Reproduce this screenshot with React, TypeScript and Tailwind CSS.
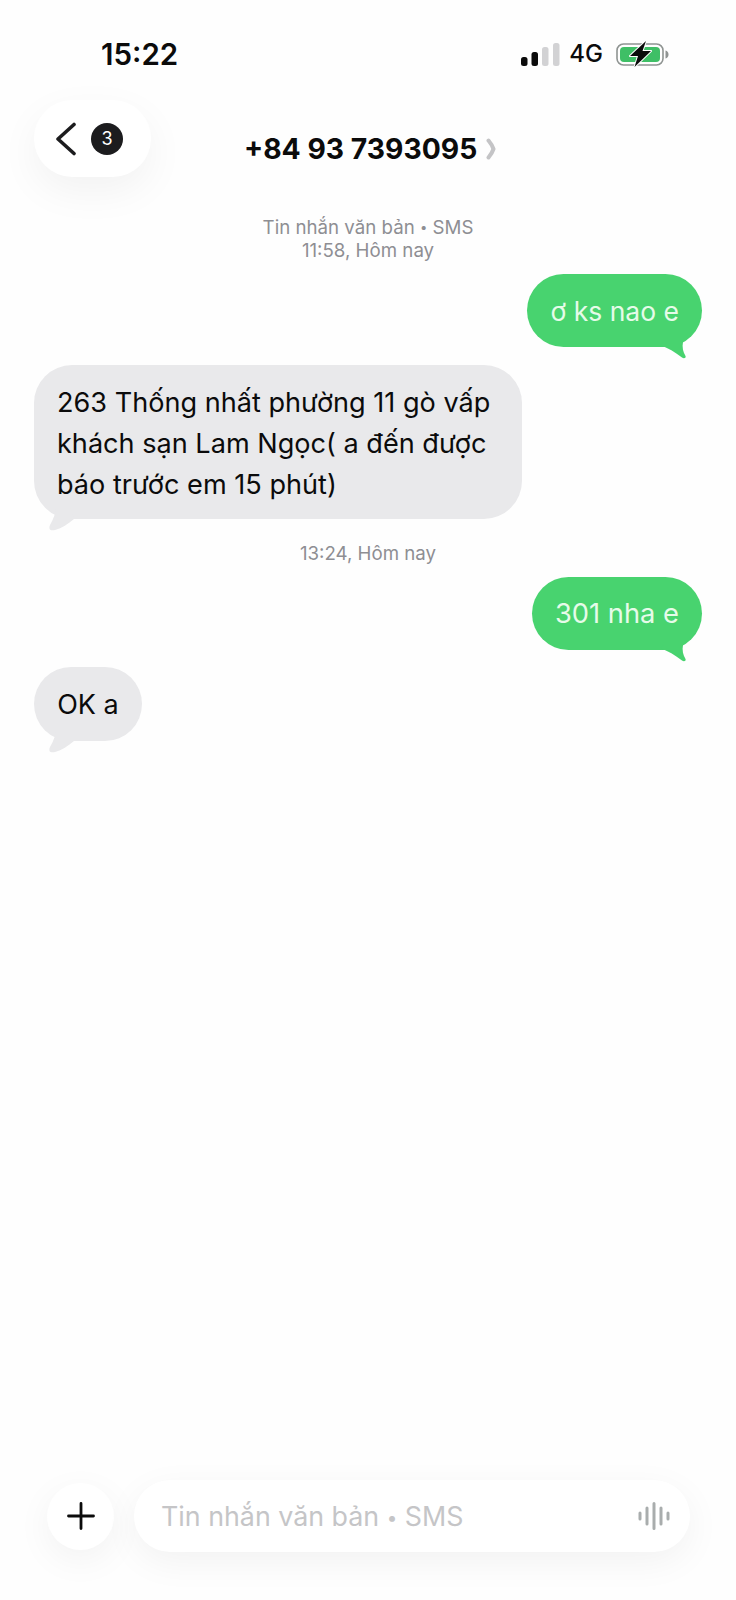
import React from 'react';

const font = { fontFamily: 'Inter, "Noto Sans", sans-serif' };

function Signal() {
  return (
    <svg width="39" height="23" viewBox="0 0 39 23" className="block">
      <rect x="0" y="14" width="6.5" height="9" rx="2.5" fill="#0b0b0b" />
      <rect x="10.5" y="9" width="6.5" height="14" rx="2.5" fill="#0b0b0b" />
      <rect x="21" y="4" width="6.5" height="19" rx="2.5" fill="#d2d2d4" />
      <rect x="32" y="0" width="6.5" height="23" rx="2.5" fill="#d2d2d4" />
    </svg>
  );
}

function Battery() {
  return (
    <svg width="53" height="26" viewBox="0 0 53 26" className="block">
      <rect x="1" y="3" width="46" height="21" rx="6.5" fill="none" stroke="#8f9492" strokeWidth="1.6" />
      <rect x="4" y="6" width="40" height="15" rx="4" fill="#3fbf66" />
      <path d="M49.5 9.500c2 .6 3 2 3 4s-1 3.400-3 4z" fill="#8f9492" />
      <path d="M30 0 14 15h8l-3.500 11L35 10h-8.500z" fill="#0b0b0b" stroke="#fff" strokeWidth="2" strokeLinejoin="round" paintOrder="stroke" />
    </svg>
  );
}

function GreenBubble({ text, className }: { text: string; className: string }) {
  return (
    <div className={`relative self-end mr-[34px] h-[73px] rounded-[37px] bg-[#48d36f] px-[23px] pt-[2px] flex items-center text-[#e6fbe9] ${className}`}>
      {text}
      <svg width="28" height="18" viewBox="0 0 28 18" className="absolute right-[14px] bottom-[-13px]">
        <path d="M0 3C8 6 15 10 22 15.500c2 1.800 4.500 .3 3.500-1.500C23 10 22 5 23 0H4z" fill="#48d36f" />
      </svg>
    </div>
  );
}

function GrayTail() {
  return (
    <svg width="36" height="26" viewBox="0 0 36 26" className="absolute left-[10px] bottom-[-13px]">
      <path d="M12 0C12 6 10 12 6 19c-2 5 1 6 5 5C18 22 24 18 30 13L26 0z" fill="#e9e9eb" />
    </svg>
  );
}

function Dot() {
  return <span className="text-[0.7em] leading-none align-[0.12em]">•</span>;
}

export default function App() {
  return (
    <div className="w-[736px] h-[1600px] bg-[#fefefe] flex flex-col overflow-hidden text-[#0b0b0b]" style={font}>
      {/* status bar */}
      <div className="flex items-center h-[36px] mt-[36px]">
        <span className="ml-[101px] text-[29.5px] leading-[36px] font-semibold">15:22</span>
        <div className="ml-auto mr-[67px] flex items-center">
          <Signal />
          <span className="ml-[9px] text-[24px] font-medium leading-[26px]">4G</span>
          <div className="ml-[13px]">
            <Battery />
          </div>
        </div>
      </div>

      {/* header */}
      <div className="flex items-start mt-[28px]">
        <div className="ml-[34px] w-[117px] h-[77px] rounded-[38px] bg-white shadow-[0_14px_40px_rgba(0,0,0,0.05)] flex items-center pl-[21px]">
          <svg width="22" height="34" viewBox="0 0 22 34" fill="none">
            <path d="M19 2.500 3 17l16 14.500" stroke="#1c1c1e" strokeWidth="3.600" strokeLinecap="round" strokeLinejoin="round" />
          </svg>
          <span className="ml-[14px] w-[32px] h-[32px] rounded-full bg-[#1c1c1e] text-white text-[18px] flex items-center justify-center">3</span>
        </div>
        <div className="ml-[93px] mt-[32px] flex items-center h-[34px]">
          <span className="text-[28.3px] font-bold leading-[34px]">+84 93 7393095</span>
          <svg width="10" height="22" viewBox="0 0 10 22" className="ml-[9px]" fill="none">
            <path d="M2.500 2.500c2.500 3 4 5.500 5 8.500-1 3-2.500 5.500-5 8.500" stroke="#c4c4c6" strokeWidth="4" strokeLinecap="round" strokeLinejoin="round" />
          </svg>
        </div>
      </div>

      {/* messages */}
      <div className="flex flex-col">
        <div className="mt-[39px] text-center text-[18.7px] leading-[23px] text-[#8e8e93]">
          <div>Tin nhắn văn bản <Dot /> SMS</div>
          <div>11:58, Hôm nay</div>
        </div>

        <div className="mt-[12px] flex flex-col">
          <GreenBubble text="ơ ks nao e" className="text-[26.5px]" />
        </div>

        <div className="relative mt-[18px] ml-[34px] w-[488px] h-[154px] rounded-[38px] bg-[#e9e9eb] pl-[23px] pt-[17px] text-[27.1px] leading-[41px]">
          <div>263 Thống nhất phường 11 gò vấp</div>
          <div>khách sạn Lam Ngọc( a đến được</div>
          <div>báo trước em 15 phút)</div>
          <GrayTail />
        </div>

        <div className="mt-[23px] text-center text-[18.7px] leading-[23px] text-[#8e8e93]">13:24, Hôm nay</div>

        <div className="mt-[12px] flex flex-col">
          <GreenBubble text="301 nha e" className="text-[27.3px]" />
        </div>

        <div className="relative mt-[17px] ml-[34px] w-[108px] h-[74px] rounded-[37px] bg-[#e9e9eb] pt-[2px] flex items-center justify-center text-[27px]">
          OK a
          <GrayTail />
        </div>
      </div>

      {/* composer */}
      <div className="mt-auto mb-[48px] flex items-center">
        <div className="ml-[47px] w-[67px] h-[67px] rounded-full bg-white shadow-[0_10px_36px_rgba(0,0,0,0.05)] flex items-center justify-center">
          <svg width="28" height="28" viewBox="0 0 28 28" fill="none">
            <path d="M14 1.500v25M1.500 14h25" stroke="#0b0b0b" strokeWidth="2.800" strokeLinecap="round" />
          </svg>
        </div>
        <div className="ml-[20px] w-[556px] h-[72px] rounded-[36px] bg-white shadow-[0_10px_36px_rgba(0,0,0,0.05)] flex items-center pl-[27px] pr-[20px]">
          <span className="text-[26.8px] text-[#c5c5c7] pt-[1px]">Tin nhắn văn bản <Dot /> SMS</span>
          <svg width="32" height="28" viewBox="0 0 32 28" className="ml-auto" fill="none" stroke="#a9adad" strokeWidth="3" strokeLinecap="round">
            <path d="M2 11v6M9 6v16M16 1.500v25M23 6v16M30 11v6" />
          </svg>
        </div>
      </div>
    </div>
  );
}
